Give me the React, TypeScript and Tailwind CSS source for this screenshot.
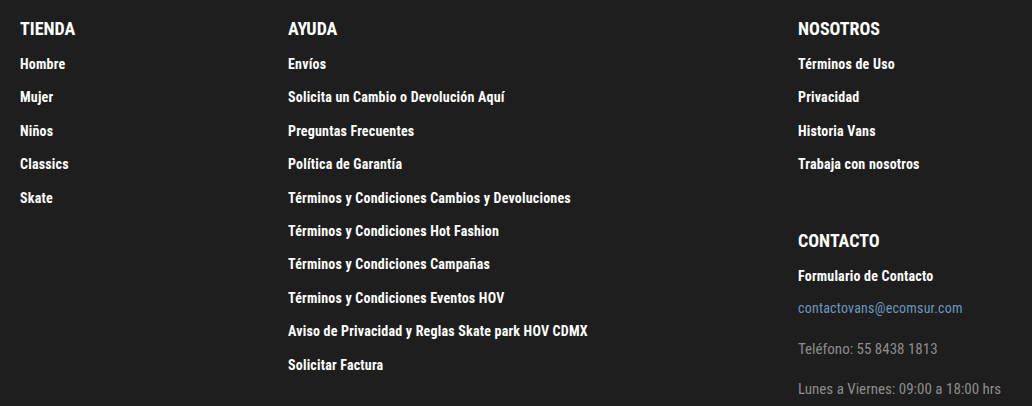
import React from "react";

const tienda = ["Hombre", "Mujer", "Niños", "Classics", "Skate"];

const ayuda = [
  "Envíos",
  "Solicita un Cambio o Devolución Aquí",
  "Preguntas Frecuentes",
  "Política de Garantía",
  "Términos y Condiciones Cambios y Devoluciones",
  "Términos y Condiciones Hot Fashion",
  "Términos y Condiciones Campañas",
  "Términos y Condiciones Eventos HOV",
  "Aviso de Privacidad y Reglas Skate park HOV CDMX",
  "Solicitar Factura",
];

const nosotros = ["Términos de Uso", "Privacidad", "Historia Vans", "Trabaja con nosotros"];

const Heading: React.FC<{ children: React.ReactNode }> = ({ children }) => (
  <h3 className="text-[18px] leading-[22px] font-bold text-white uppercase">{children}</h3>
);

const LinkList: React.FC<{ items: string[] }> = ({ items }) => (
  <ul className="mt-[15px] flex flex-col">
    {items.map((item) => (
      <li key={item} className="h-[33.4px] leading-[18px] text-[14px] font-bold text-white tracking-[0.2px]">
        <a href="#">{item}</a>
      </li>
    ))}
  </ul>
);

const App: React.FC = () => {
  return (
    <footer className="w-[1032px] h-[406px] bg-[#1e1e1e] overflow-hidden font-['Roboto',sans-serif] font-stretch-condensed">
      <div className="flex pl-[20px] pt-[18px]">
        {/* Tienda */}
        <div className="w-[268px]">
          <Heading>Tienda</Heading>
          <LinkList items={tienda} />
        </div>

        {/* Ayuda */}
        <div className="w-[510px]">
          <Heading>Ayuda</Heading>
          <LinkList items={ayuda} />
        </div>

        {/* Nosotros + Contacto */}
        <div className="flex-1">
          <Heading>Nosotros</Heading>
          <LinkList items={nosotros} />

          <div className="mt-[41px]">
            <Heading>Contacto</Heading>
            <p className="mt-[15px] text-[14px] leading-[18px] font-bold text-white tracking-[0.2px]">
              <a href="#">Formulario de Contacto</a>
            </p>
            <p className="mt-[14px] text-[14px] leading-[18px] text-[#6b98bf] tracking-[0.2px]">
              <a href="#">contactovans@ecomsur.com</a>
            </p>
            <p className="mt-[23px] text-[15px] leading-[18px] text-[#8d8d8d]">Teléfono: 55 8438 1813</p>
            <p className="mt-[22px] text-[15px] leading-[18px] text-[#8d8d8d]">
              Lunes a Viernes: 09:00 a 18:00 hrs
            </p>
          </div>
        </div>
      </div>
    </footer>
  );
};

export default App;
